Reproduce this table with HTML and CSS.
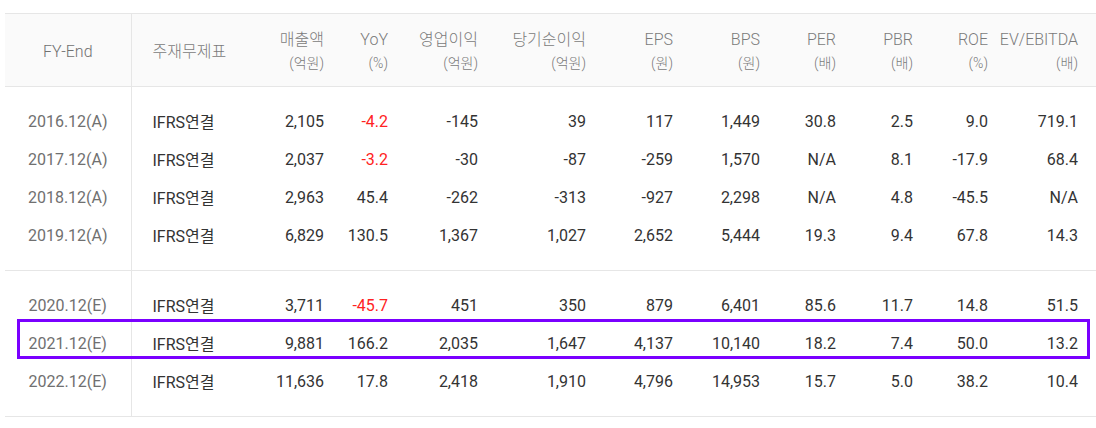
FILE: index.html
```html
<!DOCTYPE html>
<html lang="ko">
<head>
<meta charset="utf-8">
<link rel="stylesheet" href="styles.css">
</head>
<body>
<div class="wrap">
  <table class="fin">
    <colgroup>
      <col class="c1"><col class="c2"><col class="c3"><col class="c4"><col class="c5"><col class="c6">
      <col class="c7"><col class="c8"><col class="c9"><col class="c10"><col class="c11"><col class="c12">
    </colgroup>
    <thead>
      <tr>
        <th class="fy">FY-End</th>
        <th class="std">주재무제표</th>
        <th>매출액<span class="u">(억원)</span></th>
        <th>YoY<span class="u">(%)</span></th>
        <th>영업이익<span class="u">(억원)</span></th>
        <th>당기순이익<span class="u">(억원)</span></th>
        <th>EPS<span class="u">(원)</span></th>
        <th>BPS<span class="u">(원)</span></th>
        <th>PER<span class="u">(배)</span></th>
        <th>PBR<span class="u">(배)</span></th>
        <th>ROE<span class="u">(%)</span></th>
        <th class="last">EV/EBITDA<span class="u">(배)</span></th>
      </tr>
    </thead>
    <tbody>
      <tr><td class="fy">2016.12(A)</td><td class="std">IFRS연결</td><td>2,105</td><td class="neg">-4.2</td><td>-145</td><td>39</td><td>117</td><td>1,449</td><td>30.8</td><td>2.5</td><td>9.0</td><td class="last">719.1</td></tr>
      <tr><td class="fy">2017.12(A)</td><td class="std">IFRS연결</td><td>2,037</td><td class="neg">-3.2</td><td>-30</td><td>-87</td><td>-259</td><td>1,570</td><td>N/A</td><td>8.1</td><td>-17.9</td><td class="last">68.4</td></tr>
      <tr><td class="fy">2018.12(A)</td><td class="std">IFRS연결</td><td>2,963</td><td>45.4</td><td>-262</td><td>-313</td><td>-927</td><td>2,298</td><td>N/A</td><td>4.8</td><td>-45.5</td><td class="last">N/A</td></tr>
      <tr><td class="fy">2019.12(A)</td><td class="std">IFRS연결</td><td>6,829</td><td>130.5</td><td>1,367</td><td>1,027</td><td>2,652</td><td>5,444</td><td>19.3</td><td>9.4</td><td>67.8</td><td class="last">14.3</td></tr>
    </tbody>
    <tbody>
      <tr><td class="fy">2020.12(E)</td><td class="std">IFRS연결</td><td>3,711</td><td class="neg">-45.7</td><td>451</td><td>350</td><td>879</td><td>6,401</td><td>85.6</td><td>11.7</td><td>14.8</td><td class="last">51.5</td></tr>
      <tr><td class="fy">2021.12(E)</td><td class="std">IFRS연결</td><td>9,881</td><td>166.2</td><td>2,035</td><td>1,647</td><td>4,137</td><td>10,140</td><td>18.2</td><td>7.4</td><td>50.0</td><td class="last">13.2</td></tr>
      <tr><td class="fy">2022.12(E)</td><td class="std">IFRS연결</td><td>11,636</td><td>17.8</td><td>2,418</td><td>1,910</td><td>4,796</td><td>14,953</td><td>15.7</td><td>5.0</td><td>38.2</td><td class="last">10.4</td></tr>
    </tbody>
  </table>
  <div class="highlight"></div>
</div>
</body>
</html>
```

FILE: styles.css
```css
html, body {
  margin: 0;
  padding: 0;
  background: #fff;
}

body {
  font-family: Roboto, "Noto Sans CJK KR", sans-serif;
  overflow: hidden;
}

.wrap {
  position: relative;
  padding: 13px 0 0 5px;
}

.fin {
  width: 1091px;
  border-collapse: collapse;
  table-layout: fixed;
  border-top: 1px solid #e6e6e6;
  border-bottom: 1px solid #e6e6e6;
}

.c1 { width: 126px; }
.c2 { width: 109px; }
.c3 { width: 92px; }
.c4 { width: 64px; }
.c5 { width: 90px; }
.c6 { width: 108px; }
.c7 { width: 87px; }
.c8 { width: 87px; }
.c9 { width: 76px; }
.c10 { width: 77px; }
.c11 { width: 75px; }
.c12 { width: 100px; }

.fin th {
  background: #fafafa;
  height: 68px;
  padding: 4px 8px 0 0;
  text-align: right;
  font-weight: 300;
  font-size: 16px;
  line-height: 22px;
  color: #7a7a7a;
  vertical-align: middle;
  border-bottom: 1px solid #e6e6e6;
  font-family: Roboto, "Noto Sans CJK KR", sans-serif;
}

.fin th .u {
  display: block;
  font-size: 14px;
  line-height: 24px;
}

.fin td {
  height: 38px;
  padding: 0 8px 0 0;
  text-align: right;
  font-size: 16px;
  color: #333;
  white-space: nowrap;
  vertical-align: middle;
}

.fin .fy {
  text-align: center;
  padding: 0;
  color: #707070;
  border-right: 1px solid #e6e6e6;
}

.fin th.fy {
  padding-top: 4px;
}

.fin .std {
  text-align: left;
  padding: 0 0 0 21px;
}

.fin th.std {
  padding-top: 4px;
}

.fin td.std {
  color: #333;
}

.fin .last {
  padding-right: 18px;
}

.fin .neg {
  color: #f22;
}

.fin tbody tr:first-child td {
  padding-top: 15px;
}

.fin tbody tr:last-child td {
  padding-bottom: 16px;
}

.fin tbody + tbody {
  border-top: 1px solid #e6e6e6;
}

.highlight {
  position: absolute;
  left: 17px;
  top: 319px;
  width: 1067px;
  height: 34px;
  border: 3px solid #7a00ff;
  pointer-events: none;
}
```
